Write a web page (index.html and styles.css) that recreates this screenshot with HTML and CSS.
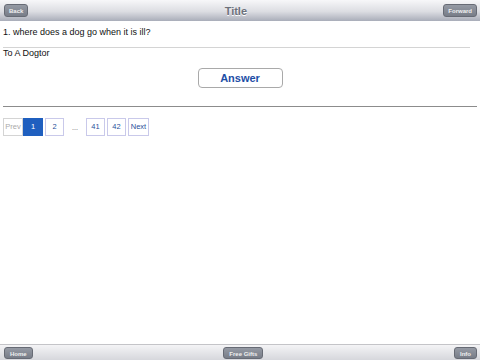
FILE: index.html
```html
<!DOCTYPE html>
<html lang="en">
<head>
    <meta charset="UTF-8">
    <title>Title</title>
    <link rel="stylesheet" href="styles.css">
</head>
<body>
    <header class="bar top">
        <a class="btn" href="#">Back</a>
        <h1>Title</h1>
        <a class="btn" href="#">Forward</a>
    </header>
    <main>
        <p class="question">1. where does a dog go when it is ill?</p>
        <p class="answer">To A Dogtor</p>
        <div class="reveal">
            <button>Answer</button>
        </div>
        <nav class="pager">
            <span class="page off">Prev</span>
            <a class="page current" href="#">1</a>
            <a class="page" href="#">2</a>
            <span class="dots">...</span>
            <a class="page" href="#">41</a>
            <a class="page" href="#">42</a>
            <a class="page wide" href="#">Next</a>
        </nav>
    </main>
    <footer class="bar bottom">
        <a class="btn" href="#">Home</a>
        <a class="btn" href="#">Free Gifts</a>
        <a class="btn" href="#">Info</a>
    </footer>
</body>
</html>
```
FILE: styles.css
```css
* {
    padding: 0;
    margin: 0;
    box-sizing: border-box;
    font-family: "Liberation Sans", Arial, sans-serif;
}

body {
    width: 480px;
    height: 360px;
    display: flex;
    flex-direction: column;
    background-color: white;
    color: #111;
    overflow: hidden;
}

a {
    text-decoration: none;
}

.bar {
    display: flex;
    align-items: center;
    justify-content: space-between;
    padding: 0 3px 0 4px;
}

.bar.top {
    height: 21px;
    background: linear-gradient(#f7f7f9, #dcdde2 55%, #a9adb9);
}

.bar h1 {
    font-size: 11px;
    font-weight: bold;
    color: #6d717b;
    text-shadow: 0 1px 0 #fff;
}

.btn {
    display: block;
    height: 13px;
    line-height: 13px;
    padding: 0 4px;
    font-size: 6px;
    font-weight: bold;
    color: #f0f0f0;
    background: linear-gradient(#959aa4, #787d88);
    border: 1px solid #676b75;
    border-radius: 3px;
}

main {
    flex: 1;
    padding: 0 3px;
}

.question {
    font-size: 9px;
    padding: 6px 0 10px;
    margin-right: 7px;
    border-bottom: 1px solid #d4d4d4;
}

.answer {
    font-size: 9px;
}

.reveal {
    display: flex;
    justify-content: center;
    padding: 10px 0 18px;
    border-bottom: 1px solid #8c8c8c;
}

.reveal button {
    width: 85px;
    height: 20px;
    background: white;
    border: 1px solid #a9a9a9;
    border-radius: 4px;
    font-size: 11px;
    font-weight: bold;
    color: #1d4ea6;
}

.pager {
    display: flex;
    align-items: center;
    gap: 2px;
    padding-top: 11px;
}

.page {
    display: block;
    width: 19px;
    height: 18px;
    line-height: 16px;
    text-align: center;
    font-size: 7.5px;
    color: #2a4f9a;
    border: 1px solid #c9c9ea;
}

.page.wide {
    width: 21px;
}

.page.off {
    width: 20px;
    margin-right: -2px;
    color: #aaa;
    border-color: #d4d4d4;
}

.page.current {
    width: 20px;
    background-color: #1f5fbf;
    border-color: #1f5fbf;
    color: white;
}

.dots {
    width: 18px;
    text-align: center;
    font-size: 7px;
    color: #555;
}

.bar.bottom {
    height: 16px;
    padding-bottom: 1px;
    align-items: flex-end;
    border-top: 1px solid #c4c4c8;
    background: linear-gradient(#f4f4f6, #d6d7dc);
}

.bar.bottom .btn {
    height: 12px;
    line-height: 12px;
    padding: 0 5px;
}
```
